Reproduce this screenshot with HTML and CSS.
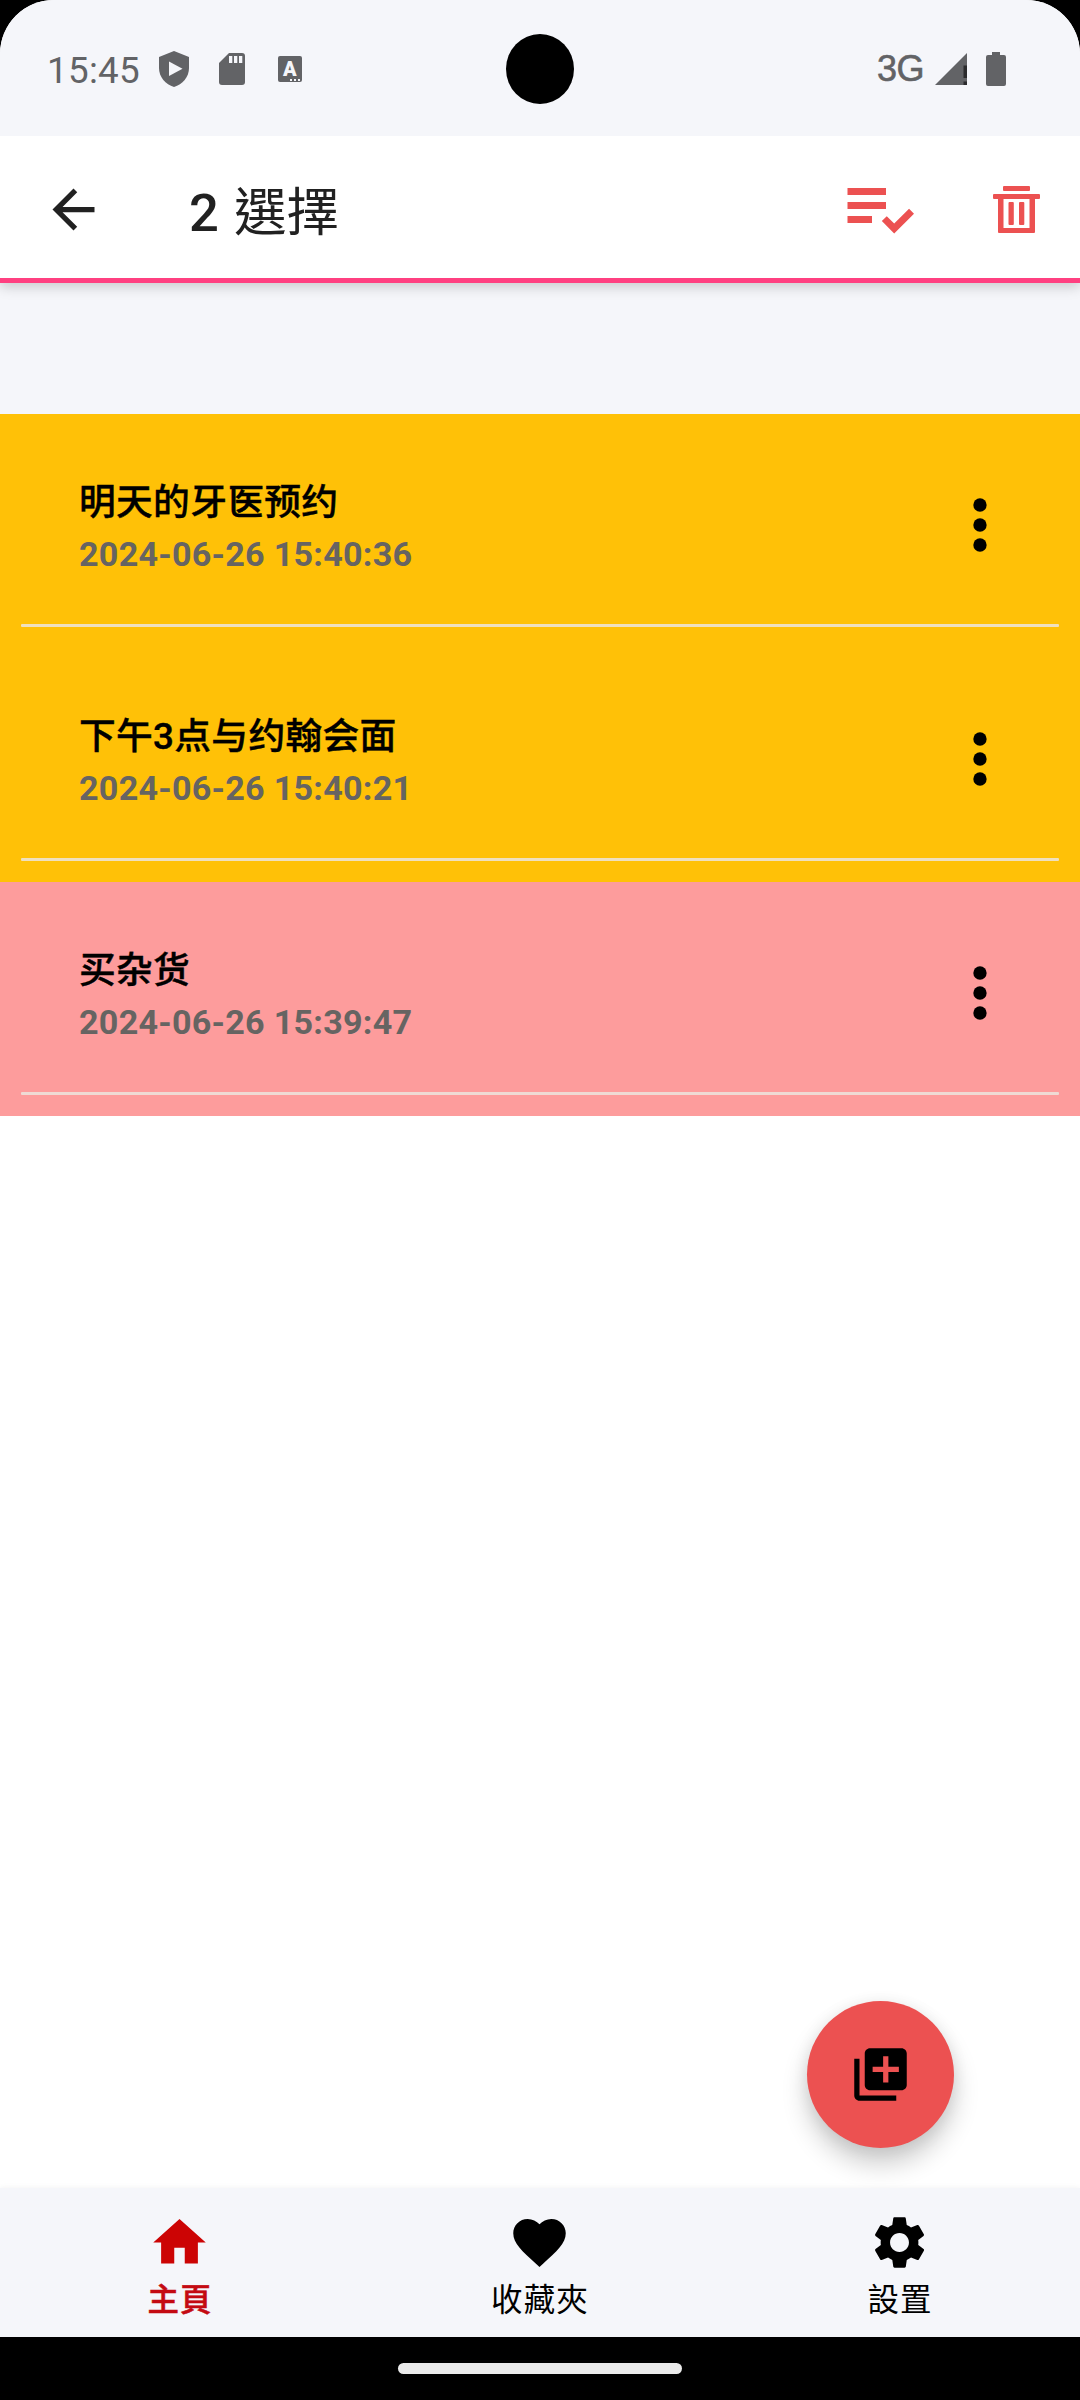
FILE: index.html
```html
<!DOCTYPE html>
<html lang="zh-TW">
  <head>
    <meta charset="UTF-8" />
    <meta name="viewport" content="width=device-width, initial-scale=1.0" />
    <title>筆記</title>
    <link rel="stylesheet" href="styles.css">
  </head>
  <body>
    <div class="screen">
      <header class="status-bar">
        <span class="clock">15:45</span>
        <svg class="icon-shield" viewBox="0 0 30 36">
          <path d="M15 0 30 6v11c0 9-6.500 16.500-15 19C6.500 33.500 0 26 0 17V6z" />
          <path class="cut" d="M10 10.500v14.500l13.500-7.200z" />
        </svg>
        <svg class="icon-sd" viewBox="0 0 26 32">
          <path d="M10 0h13q3 0 3 3v26q0 3-3 3H3q-3 0-3-3V10z" />
          <path class="cut" d="M10 3h3.300v7H10zM15 3h3.300v7H15zM20 3h3.300v7H20z" />
        </svg>
        <span class="badge">
          <b>A</b>
          <i></i><i></i><i></i>
        </span>
        <span class="camera"></span>
        <span class="network">3G</span>
        <svg class="icon-signal" viewBox="0 0 32 32">
          <path d="M32 0v32H0z" />
          <path class="alert" d="M28.500 12.500H32V25h-3.500zM28.500 28.500H32V32h-3.500z" />
        </svg>
        <svg class="icon-battery" viewBox="0 0 20 34">
          <path d="M6 0h8v3h4q2 0 2 2v27q0 2-2 2H2q-2 0-2-2V5q0-2 2-2h4z" />
        </svg>
      </header>

      <div class="app-bar">
        <svg class="icon-back" viewBox="0 0 24 24">
          <path d="M20 11H7.830l5.590-5.590L12 4l-8 8 8 8 1.410-1.410L7.830 13H20v-2z" />
        </svg>
        <h1 class="title">2 <span>選擇</span></h1>
        <svg class="icon-check-list" viewBox="0 0 24 24">
          <path d="M3 10h11v2H3zm0-4h11v2H3zm0 8h7v2H3zm17.590-2.070-4.250 4.240-2.120-2.120-1.410 1.410L16.340 19 22 13.340z" />
        </svg>
        <svg class="icon-trash" viewBox="0 0 47 47">
          <rect x="10" y="0" width="27" height="5" rx="1" />
          <rect x="0" y="8" width="47" height="5" rx="1" />
          <path fill-rule="evenodd" d="M5 12h37v34q0 1-1 1H6q-1 0-1-1zM10.500 13v29h26V13z" />
          <rect x="15.500" y="16" width="5.300" height="23" rx="1" />
          <rect x="26" y="16" width="5.300" height="23" rx="1" />
        </svg>
      </div>

      <main class="content">
        <ul class="notes">
          <li class="note selected">
            <div class="note-text">
              <h2>明天的牙医预约</h2>
              <time>2024-06-26 15:40:36</time>
            </div>
            <svg class="icon-more" viewBox="0 0 24 24">
              <circle cx="12" cy="6" r="2" /><circle cx="12" cy="12" r="2" /><circle cx="12" cy="18" r="2" />
            </svg>
          </li>
          <li class="note selected">
            <div class="note-text">
              <h2>下午3点与约翰会面</h2>
              <time>2024-06-26 15:40:21</time>
            </div>
            <svg class="icon-more" viewBox="0 0 24 24">
              <circle cx="12" cy="6" r="2" /><circle cx="12" cy="12" r="2" /><circle cx="12" cy="18" r="2" />
            </svg>
          </li>
          <li class="note">
            <div class="note-text">
              <h2>买杂货</h2>
              <time>2024-06-26 15:39:47</time>
            </div>
            <svg class="icon-more" viewBox="0 0 24 24">
              <circle cx="12" cy="6" r="2" /><circle cx="12" cy="12" r="2" /><circle cx="12" cy="18" r="2" />
            </svg>
          </li>
        </ul>
        <button class="fab" aria-label="新增">
          <svg viewBox="0 0 24 24">
            <path d="M4 6H2v14c0 1.100.9 2 2 2h14v-2H4V6zm16-4H8c-1.100 0-2 .9-2 2v12c0 1.100.9 2 2 2h12c1.100 0 2-.9 2-2V4c0-1.100-.9-2-2-2zm-1 9h-4v4h-2v-4H9V9h4V5h2v4h4v2z" />
          </svg>
        </button>
      </main>

      <nav class="bottom-nav">
        <a class="nav-item active">
          <svg viewBox="0 0 24 24"><path d="M10 20v-6h4v6h5v-8h3L12 3 2 12h3v8z" /></svg>
          <span>主頁</span>
        </a>
        <a class="nav-item">
          <svg viewBox="0 0 24 24">
            <path d="M12 21.350l-1.450-1.320C5.400 15.360 2 12.280 2 8.500 2 5.420 4.420 3 7.500 3c1.740 0 3.410.81 4.500 2.090C13.090 3.810 14.760 3 16.500 3 19.580 3 22 5.420 22 8.500c0 3.780-3.400 6.860-8.550 11.540L12 21.350z" />
          </svg>
          <span>收藏夾</span>
        </a>
        <a class="nav-item">
          <svg viewBox="0 0 24 24">
            <path d="M19.140 12.940c.04-.3.06-.61.06-.94 0-.32-.02-.64-.07-.94l2.030-1.580c.18-.14.23-.41.12-.61l-1.920-3.320c-.12-.22-.37-.29-.59-.22l-2.390.96c-.5-.38-1.030-.7-1.620-.94l-.36-2.540c-.04-.24-.24-.41-.48-.41h-3.840c-.24 0-.43.17-.47.41l-.36 2.540c-.59.24-1.130.57-1.620.94l-2.390-.96c-.22-.08-.47 0-.59.22L2.740 8.870c-.12.21-.08.47.12.61l2.030 1.580c-.05.3-.07.63-.07.94s.02.64.07.94l-2.030 1.580c-.18.14-.23.41-.12.61l1.920 3.320c.12.22.37.29.59.22l2.390-.96c.5.38 1.030.7 1.620.94l.36 2.540c.05.24.24.41.48.41h3.840c.24 0 .44-.17.47-.41l.36-2.540c.59-.24 1.130-.56 1.620-.94l2.390.96c.22.08.47 0 .59-.22l1.920-3.320c.12-.22.07-.47-.12-.61l-2.010-1.580zM12 15.600c-1.980 0-3.600-1.620-3.600-3.600s1.620-3.600 3.600-3.600 3.600 1.620 3.600 3.600-1.620 3.600-3.600 3.600z" />
          </svg>
          <span>設置</span>
        </a>
      </nav>

      <footer class="system-bar"><span class="handle"></span></footer>
    </div>
  </body>
</html>
```
FILE: styles.css
```css
* {
  box-sizing: border-box;
  margin: 0;
  padding: 0;
}

body {
  background: #000;
  font-family: Roboto, "Noto Sans CJK TC", sans-serif;
}

svg {
  display: block;
  flex: none;
}

.screen {
  display: flex;
  flex-direction: column;
  width: 1080px;
  height: 2400px;
  overflow: hidden;
  border-radius: 54px 54px 0 0;
  background: #fff;
}

/* status bar */
.status-bar {
  position: relative;
  z-index: 2;
  display: flex;
  align-items: center;
  height: 136px;
  padding: 2px 74px 0 47px;
  background: #f5f6fa;
  color: #626366;
  fill: #626366;
}

.status-bar .cut {
  fill: #f5f6fa;
}

.clock {
  width: 112px;
  padding-top: 3px;
  font-size: 36.75px;
  line-height: 44px;
  letter-spacing: 0.3px;
}

.icon-shield {
  width: 30px;
  height: 36px;
}

.icon-sd {
  width: 26px;
  height: 32px;
  margin-left: 30px;
}

.badge {
  position: relative;
  display: flex;
  justify-content: flex-end;
  align-items: flex-end;
  gap: 2px;
  width: 24px;
  height: 26px;
  margin-left: 33px;
  padding: 0 2px 1.5px 0;
  border-radius: 2px;
  background: #626366;
}

.badge b {
  position: absolute;
  left: 5px;
  top: 3px;
  color: #f5f6fa;
  font-size: 20px;
  font-weight: 900;
  line-height: 20px;
}

.badge i {
  width: 2px;
  height: 2px;
  background: #f5f6fa;
}

.camera {
  position: absolute;
  left: 506px;
  top: 34px;
  width: 68px;
  height: 70px;
  border-radius: 50%;
  background: #000;
}

.network {
  margin-left: auto;
  font-family: "Liberation Sans", sans-serif;
  font-size: 36px;
  line-height: 40px;
  letter-spacing: -0.5px;
  -webkit-text-stroke: 0.6px #626366;
}

.icon-signal {
  width: 32px;
  height: 32px;
  margin-left: 11px;
}

.icon-signal .alert {
  fill: #2b2b2d;
}

.icon-battery {
  width: 20px;
  height: 34px;
  margin-left: 19px;
}

/* selection toolbar */
.app-bar {
  position: relative;
  z-index: 1;
  display: flex;
  align-items: center;
  height: 147px;
  padding: 4px 40px 0 42px;
  border-bottom: 5px solid #ff4081;
  background: #fff;
  box-shadow: 0 4px 12px rgba(0, 0, 0, 0.18);
}

.icon-back {
  width: 63px;
  height: 63px;
  fill: #212121;
}

.title {
  margin-left: 84px;
  padding-top: 8px;
  color: #212121;
  font-size: 52.5px;
  font-weight: 500;
  line-height: 62px;
}

.title span {
  margin-left: 2px;
  font-weight: 400;
}

.icon-check-list {
  width: 84px;
  height: 84px;
  margin-left: auto;
  fill: #ec5151;
}

.icon-trash {
  width: 47px;
  height: 47px;
  margin-left: 72px;
  fill: #ec5151;
}

/* notes */
.content {
  position: relative;
  flex: 1;
}

.notes {
  padding-top: 131px;
  background: #f5f6fa;
  list-style: none;
}

.note {
  position: relative;
  display: flex;
  justify-content: space-between;
  height: 234px;
  padding: 63px 60px 0 79px;
  background: #fd9c9c;
}

.note.selected {
  background: #ffc107;
}

.note::after {
  content: "";
  position: absolute;
  left: 21px;
  right: 21px;
  bottom: 21px;
  height: 3px;
  border-radius: 1px;
  background: rgba(236, 229, 222, 0.85);
}

.note h2 {
  color: #000;
  font-family: Roboto, "Noto Sans CJK SC", sans-serif;
  font-size: 36.75px;
  font-weight: 500;
  line-height: 52px;
  letter-spacing: 0.3px;
  -webkit-text-stroke: 0.4px #000;
}

.note time {
  display: block;
  color: #666462;
  font-size: 34.125px;
  font-weight: 700;
  line-height: 51px;
  letter-spacing: 0.25px;
}

.icon-more {
  width: 80px;
  height: 80px;
  margin-top: 7.5px;
}

.fab {
  position: absolute;
  right: 126px;
  bottom: 40px;
  display: flex;
  justify-content: center;
  align-items: center;
  width: 147px;
  height: 147px;
  border: none;
  border-radius: 50%;
  background: #ec5151;
  box-shadow: 0 16px 26px rgba(0, 0, 0, 0.2), 0 2px 16px rgba(0, 0, 0, 0.08);
}

.fab svg {
  width: 63px;
  height: 63px;
}

/* bottom navigation */
.bottom-nav {
  position: relative;
  display: grid;
  grid-template-columns: repeat(3, 1fr);
  height: 149px;
  background: #f5f6fa;
  box-shadow: 0 0 6px rgba(0, 0, 0, 0.06);
}

.nav-item {
  display: flex;
  flex-direction: column;
  align-items: center;
  padding: 23px 1px 0 0;
  color: #000;
  fill: #000;
  font-size: 31.5px;
  line-height: 40px;
  letter-spacing: 1.1px;
}

.nav-item svg {
  width: 63px;
  height: 63px;
}

.nav-item span {
  margin: 7px 0 0 1px;
}

.nav-item.active {
  color: #c40a12;
  fill: #cc0404;
  font-weight: 500;
}

.nav-item.active span {
  -webkit-text-stroke: 0.5px #c40a12;
}

.system-bar {
  position: relative;
  display: flex;
  justify-content: center;
  height: 63px;
  padding-top: 26px;
  background: #000;
}

.handle {
  width: 284px;
  height: 11px;
  border-radius: 6px;
  background: #ebebeb;
}
```
